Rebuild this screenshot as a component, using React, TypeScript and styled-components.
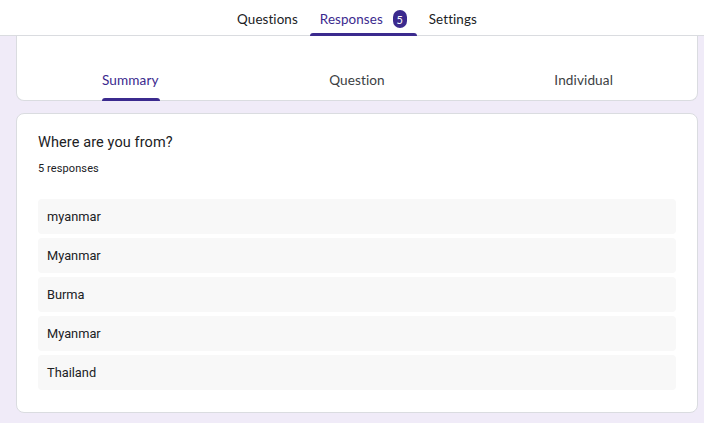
import styled, { createGlobalStyle } from 'styled-components';

const GlobalStyle = createGlobalStyle`
    html, body {
        margin: 0;
        padding: 0;
        background: #f0ebf8;
        font-family: Roboto, "Liberation Sans", sans-serif;
        color: #202124;
    }
`;

const responses = ['myanmar', 'Myanmar', 'Burma', 'Myanmar', 'Thailand'];

const Header = styled.header`
    height: 36px;
    background: #fff;
    border-bottom: 1px solid #dadce0;
    box-sizing: border-box;
    display: flex;
    justify-content: center;
    gap: 2px;
    padding-left: 10px;
`;

const HeaderTab = styled.div<{ $active?: boolean }>`
    position: relative;
    display: flex;
    align-items: center;
    gap: 10px;
    padding: 3px 10px 0;
    font-family: Lato, sans-serif;
    font-size: 13.4px;
    letter-spacing: 0.1px;
    color: ${({ $active }) => ($active ? '#3b2a8e' : '#202124')};

    &::after {
        content: '';
        display: ${({ $active }) => ($active ? 'block' : 'none')};
        position: absolute;
        left: 0;
        right: 0;
        bottom: -1px;
        height: 3px;
        border-radius: 3px 3px 0 0;
        background: #3b2a8e;
    }
`;

const Badge = styled.span`
    width: 14px;
    height: 18px;
    border-radius: 7px;
    background: #3b2a8e;
    color: #fff;
    font-size: 11px;
    display: flex;
    align-items: center;
    justify-content: center;
`;

const Page = styled.main`
    padding: 0 6px 10px 16px;
`;

const TabsCard = styled.section`
    background: #fff;
    border: 1px solid #dadce0;
    border-top: none;
    border-radius: 0 0 8px 8px;
    height: 65px;
    box-sizing: border-box;
    display: grid;
    grid-template-columns: repeat(3, 1fr);
    align-items: end;
`;

const SubTab = styled.div<{ $active?: boolean }>`
    display: flex;
    flex-direction: column;
    align-items: center;
    font-family: Lato, sans-serif;
    font-size: 13.6px;
    letter-spacing: 0.1px;
    color: ${({ $active }) => ($active ? '#3b2a8e' : '#3c4043')};
`;

const SubTabLabel = styled.span`
    position: relative;
    padding-bottom: 12px;
`;

const Indicator = styled.span`
    position: absolute;
    left: 0;
    right: -1px;
    bottom: -1px;
    height: 3px;
    border-radius: 3px 3px 0 0;
    background: #3b2a8e;
`;

const QuestionCard = styled.section`
    margin-top: 12px;
    background: #fff;
    border: 1px solid #dadce0;
    border-radius: 8px;
    padding: 19px 21px 22px 21px;
`;

const Title = styled.h2`
    margin: 0;
    font-size: 14.5px;
    font-weight: 400;
    line-height: 20px;
    letter-spacing: 0.1px;
`;

const Count = styled.div`
    margin-top: 8px;
    font-size: 11px;
    line-height: 16px;
    letter-spacing: 0.1px;
`;

const List = styled.ul`
    list-style: none;
    margin: 22px 0 0;
    padding: 0;
    display: flex;
    flex-direction: column;
    gap: 4px;
`;

const Row = styled.li`
    height: 35px;
    background: #f8f8f8;
    border-radius: 4px;
    padding: 0 9px;
    display: flex;
    align-items: center;
    font-size: 12.8px;
`;

export default function App() {
    return (
        <>
            <GlobalStyle />
            <Header>
                <HeaderTab>Questions</HeaderTab>
                <HeaderTab $active>
                    Responses
                    <Badge>5</Badge>
                </HeaderTab>
                <HeaderTab>Settings</HeaderTab>
            </Header>
            <Page>
                <TabsCard>
                    <SubTab $active>
                        <SubTabLabel>
                            Summary
                            <Indicator />
                        </SubTabLabel>
                    </SubTab>
                    <SubTab>
                        <SubTabLabel>Question</SubTabLabel>
                    </SubTab>
                    <SubTab>
                        <SubTabLabel>Individual</SubTabLabel>
                    </SubTab>
                </TabsCard>
                <QuestionCard>
                    <Title>Where are you from?</Title>
                    <Count>5 responses</Count>
                    <List>
                        {responses.map((r, i) => (
                            <Row key={i}>{r}</Row>
                        ))}
                    </List>
                </QuestionCard>
            </Page>
        </>
    );
}
